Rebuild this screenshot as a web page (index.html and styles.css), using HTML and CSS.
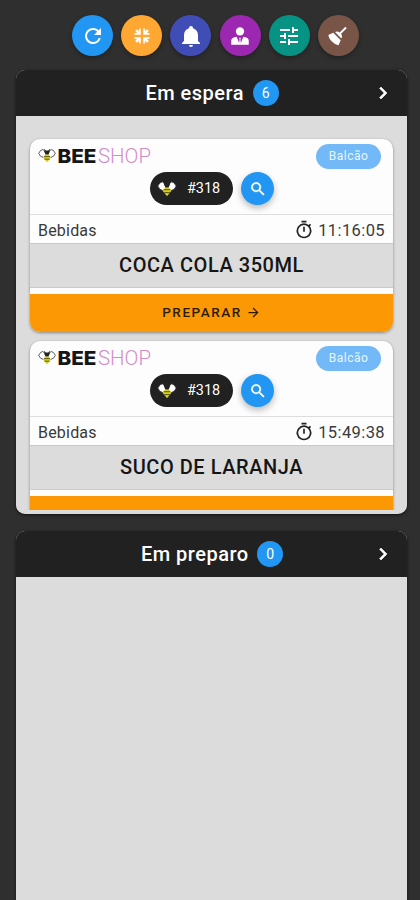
FILE: index.html
```html
<!DOCTYPE html>
<html lang="pt-BR">
<head>
<meta charset="utf-8">
<title>Pedidos</title>
<link rel="stylesheet" href="styles.css">
</head>
<body>
<svg class="defs" aria-hidden="true">
  <symbol id="bee" viewBox="0 0 18 15">
    <path class="wing" d="M8.500 8.500 6.800 3.200 4.800 1.500 2.700 2.400.7 5.300 2.500 8.200 5.500 9.500ZM9.500 8.500 11.200 3.200 13.200 1.500 15.300 2.400 17.300 5.300 15.500 8.200 12.500 9.500Z"/>
    <path class="head" d="M6 .8 7.800 2.500h2.400L12 .8l-.6 3.500L10 6.800H8L6.600 4.300Z"/>
    <path class="body" d="M7.300 6.500h3.400l2.300 3L9 14.500 5 9.500Z"/>
    <path class="stripe" d="M6 8.600h6M6.500 11.200h5"/>
  </symbol>
  <symbol id="search" viewBox="0 0 24 24"><path d="M15.500 14h-.79l-.28-.27A6.470 6.470 0 0 0 16 9.500 6.500 6.500 0 1 0 9.500 16c1.610 0 3.090-.59 4.230-1.570l.27.28v.79l5 4.990L20.490 19l-4.990-5zm-6 0C7.010 14 5 11.990 5 9.500S7.010 5 9.500 5 14 7.010 14 9.500 11.990 14 9.500 14z"/></symbol>
  <symbol id="timer" viewBox="0 0 24 24"><path d="M15 1H9v2h6V1zm-4 13h2V8h-2v6zm8.030-6.610 1.420-1.420c-.43-.51-.9-.99-1.410-1.410l-1.420 1.420A8.962 8.962 0 0 0 12 4a9 9 0 1 0 7.030 3.390zM12 20a7 7 0 1 1 0-14 7 7 0 0 1 0 14z"/></symbol>
  <symbol id="arrow" viewBox="0 0 24 24"><path d="m12 4-1.410 1.410L16.170 11H4v2h12.170l-5.580 5.590L12 20l8-8z"/></symbol>
  <symbol id="chevron" viewBox="0 0 24 24"><path d="M8.590 16.580 13.170 12 8.590 7.410 10 6l6 6-6 6z"/></symbol>
</svg>

<nav class="toolbar">
  <button class="tool blue" aria-label="Atualizar"><svg class="large" viewBox="0 0 24 24"><path d="M17.650 6.350A7.958 7.958 0 0 0 12 4a8 8 0 1 0 7.730 10h-2.080A5.990 5.990 0 0 1 12 18a6 6 0 1 1 0-12c1.660 0 3.140.69 4.220 1.780L13 11h7V4z"/></svg></button>
  <button class="tool orange" aria-label="Recolher"><svg viewBox="0 0 24 24"><path d="M3 8.500h3.200L3.800 6.100 6.100 3.800 8.500 6.200V3h2v7.500H3zM13.500 3h2v3.200l2.400-2.400 2.300 2.300-2.400 2.400H21v2h-7.500zM3 13.500h7.500V21h-2v-3.200l-2.400 2.400-2.300-2.300 2.400-2.400H3zM13.500 13.500H21v2h-3.200l2.400 2.400-2.300 2.300-2.400-2.400V21h-2z"/></svg></button>
  <button class="tool indigo" aria-label="Notificações"><svg class="large" viewBox="0 0 24 24"><path d="M21 19v1H3v-1l2-2v-6c0-3.100 2.030-5.830 5-6.710V4a2 2 0 0 1 4 0v.29c2.970.88 5 3.610 5 6.710v6zm-7 2a2 2 0 0 1-4 0"/></svg></button>
  <button class="tool purple" aria-label="Cliente"><svg viewBox="0 0 24 24"><circle cx="12" cy="6.500" r="5"/><path d="M8 13 11 20.500 11.500 16 11 14h2l-.5 2 .5 4.500 3-7.500c3.800.3 6.500 1.800 6.500 4.500V22.500h-21v-5C1.500 14.800 4.200 13.300 8 13z"/></svg></button>
  <button class="tool teal" aria-label="Filtros"><svg class="large" viewBox="0 0 24 24"><path d="M3 17v2h6v-2zM3 5v2h10V5zm10 16v-2h8v-2h-8v-2h-2v6zM7 9v2H3v2h4v2h2V9zm14 4v-2H11v2zm-6-4h2V7h4V5h-4V3h-2z"/></svg></button>
  <button class="tool brown" aria-label="Limpar"><svg class="large" viewBox="0 0 24 24"><path d="m19.360 2.720 1.420 1.420-5.720 5.710c1.070 1.540 1.220 3.390.32 4.590L9.060 8.120c1.200-.9 3.050-.75 4.590.32zM5.930 17.570c-2.010-2.010-3.240-4.410-3.580-6.650l4.880-2.090 7.440 7.440-2.090 4.880c-2.240-.34-4.640-1.570-6.650-3.580"/></svg></button>
</nav>

<main class="board">
  <section class="panel waiting">
    <header class="panel-head">
      <h2>Em espera</h2><span class="count">6</span>
      <svg class="next"><use href="#chevron"/></svg>
    </header>
    <div class="list">
      <article class="card">
        <div class="card-top">
          <div class="brand-row">
            <svg class="brand" viewBox="0 0 118 24"><use href="#bee" x="0" y="4" width="18" height="15"/><text class="bee-word" x="19.500" y="19" textLength="39" lengthAdjust="spacingAndGlyphs">BEE</text><text class="shop-word" x="60" y="19" textLength="53" lengthAdjust="spacingAndGlyphs">SHOP</text></svg>
            <span class="tag">Balcão</span>
          </div>
          <div class="order-row">
            <span class="order"><svg class="bee-icon"><use href="#bee"/></svg>#318</span>
            <button class="search" aria-label="Buscar"><svg><use href="#search"/></svg></button>
          </div>
        </div>
        <div class="meta"><span>Bebidas</span><span class="time"><svg><use href="#timer"/></svg>11:16:05</span></div>
        <div class="product">COCA COLA 350ML</div>
        <button class="prepare">PREPARAR<svg><use href="#arrow"/></svg></button>
      </article>
      <article class="card">
        <div class="card-top">
          <div class="brand-row">
            <svg class="brand" viewBox="0 0 118 24"><use href="#bee" x="0" y="4" width="18" height="15"/><text class="bee-word" x="19.500" y="19" textLength="39" lengthAdjust="spacingAndGlyphs">BEE</text><text class="shop-word" x="60" y="19" textLength="53" lengthAdjust="spacingAndGlyphs">SHOP</text></svg>
            <span class="tag">Balcão</span>
          </div>
          <div class="order-row">
            <span class="order"><svg class="bee-icon"><use href="#bee"/></svg>#318</span>
            <button class="search" aria-label="Buscar"><svg><use href="#search"/></svg></button>
          </div>
        </div>
        <div class="meta"><span>Bebidas</span><span class="time"><svg><use href="#timer"/></svg>15:49:38</span></div>
        <div class="product">SUCO DE LARANJA</div>
        <div class="prepare"></div>
      </article>
    </div>
  </section>
  <section class="panel preparing">
    <header class="panel-head">
      <h2>Em preparo</h2><span class="count">0</span>
      <svg class="next"><use href="#chevron"/></svg>
    </header>
  </section>
</main>
</body>
</html>
```
FILE: styles.css
```css
* { box-sizing: border-box; }
body {
  margin: 0;
  height: 900px;
  overflow: hidden;
  background: #2f2f2f;
  color: #222;
  font-family: Roboto, "Liberation Sans", sans-serif;
}
button { border: 0; padding: 0; font: inherit; color: inherit; }
svg { display: block; fill: currentColor; }
.defs { position: absolute; width: 0; height: 0; }

.toolbar { display: flex; gap: 8.2px; padding: 15px 0 14px 72px; }
.tool {
  flex: none;
  width: 41px;
  height: 41px;
  border-radius: 50%;
  color: #fff;
  display: grid;
  place-items: center;
  box-shadow: 0 2px 4px rgba(0, 0, 0, .3);
}
.tool svg { width: 20px; height: 20px; }
.tool .large { width: 24px; height: 24px; }
.blue { background: #2196f3; }
.orange { background: #ffa733; }
.indigo { background: #3f4db5; }
.purple { background: #9c27b0; }
.teal { background: #079384; }
.brown { background: #795548; }

.panel {
  margin: 0 13px 0 16px;
  background: #dcdcdc;
  border-radius: 9px;
  overflow: hidden;
  box-shadow: 0 1px 3px #111;
}
.waiting { height: 444px; padding-bottom: 4px; display: flex; flex-direction: column; }
.preparing { margin-top: 17px; height: 400px; }
.panel-head {
  flex: none;
  height: 46px;
  background: #212121;
  color: #fff;
  display: grid;
  grid-template-columns: 1fr auto auto 1fr;
  align-items: center;
  column-gap: 9px;
  padding: 0 12px 0 13px;
}
.panel-head h2 { grid-column: 2; margin: 0; font-size: 20px; line-height: 26px; font-weight: 500; letter-spacing: .5px; margin-right: -.5px; }
.count {
  width: 26px;
  height: 26px;
  border-radius: 50%;
  background: #2196f3;
  font-size: 14px;
  line-height: 26px;
  text-align: center;
}
.next { justify-self: end; width: 24px; height: 24px; stroke: #fff; stroke-width: .6; }

.list { flex: 1; min-height: 0; overflow: hidden; padding: 23px 14px 0; }
.card {
  height: 193px;
  margin-bottom: 9px;
  border-radius: 10px;
  overflow: hidden;
  background: #fdfdfd;
  box-shadow: 0 1px 3px rgba(0, 0, 0, .4);
  display: flex;
  flex-direction: column;
}
.card-top { height: 76px; border-bottom: 1px solid #dedede; }
.brand-row { display: flex; justify-content: space-between; height: 33px; padding: 5px 12px 0 8px; }
.brand { width: 118px; height: 24px; overflow: visible; }
.bee-word { font: 800 19px Inter, sans-serif; fill: #161616; }
.shop-word { font: 300 20px Roboto, sans-serif; fill: #d28cc8; }
.wing { fill: #fff; stroke: #333; stroke-width: .8; }
.head { fill: #222; }
.body { fill: #d8d020; }
.stripe { stroke: #555016; stroke-width: .9; }
.tag {
  width: 65px;
  height: 25px;
  border-radius: 13px;
  background: #73b9f7;
  color: #e8f6ff;
  font-size: 12px;
  line-height: 24px;
  letter-spacing: .5px;
  text-align: center;
}
.order-row { display: flex; align-items: center; gap: 8px; padding-left: 120px; }
.order {
  display: flex;
  align-items: center;
  gap: 10px;
  width: 83px;
  height: 33px;
  padding-left: 7px;
  border-radius: 17px;
  background: #212121;
  color: #fff;
  font-size: 14.4px;
}
.bee-icon { width: 20px; height: 17px; }
.search {
  width: 33px;
  height: 33px;
  border-radius: 50%;
  display: grid;
  place-items: center;
  background: #2196f3;
  color: #fff;
  box-shadow: 0 3px 7px rgba(0, 0, 0, .28);
}
.search svg { width: 18px; height: 18px; stroke: #fff; stroke-width: .5; }
.meta {
  display: flex;
  justify-content: space-between;
  align-items: center;
  height: 28px;
  padding: 2px 8px 0;
  font-size: 16px;
  letter-spacing: .2px;
  color: #3a3a3a;
}
.time { display: flex; align-items: center; gap: 4px; font-size: 16.5px; letter-spacing: .4px; }
.time svg { width: 20px; height: 20px; color: #222; }
.product {
  height: 45px;
  border: 1px solid #c9c9c9;
  border-width: 1px 0;
  background: #dcdcdc;
  color: #151515;
  font-size: 20px;
  line-height: 43px;
  letter-spacing: .55px;
  font-weight: 500;
  text-align: center;
}
.prepare {
  display: flex;
  align-items: center;
  justify-content: center;
  gap: 4px;
  height: 38px;
  margin-top: auto;
  padding-bottom: 2px;
  background: #fc9803;
  color: #2b1b00;
  font-size: 13.500px;
  font-weight: 500;
  letter-spacing: 1.55px;
}
.prepare svg { width: 15px; height: 15px; }
```
